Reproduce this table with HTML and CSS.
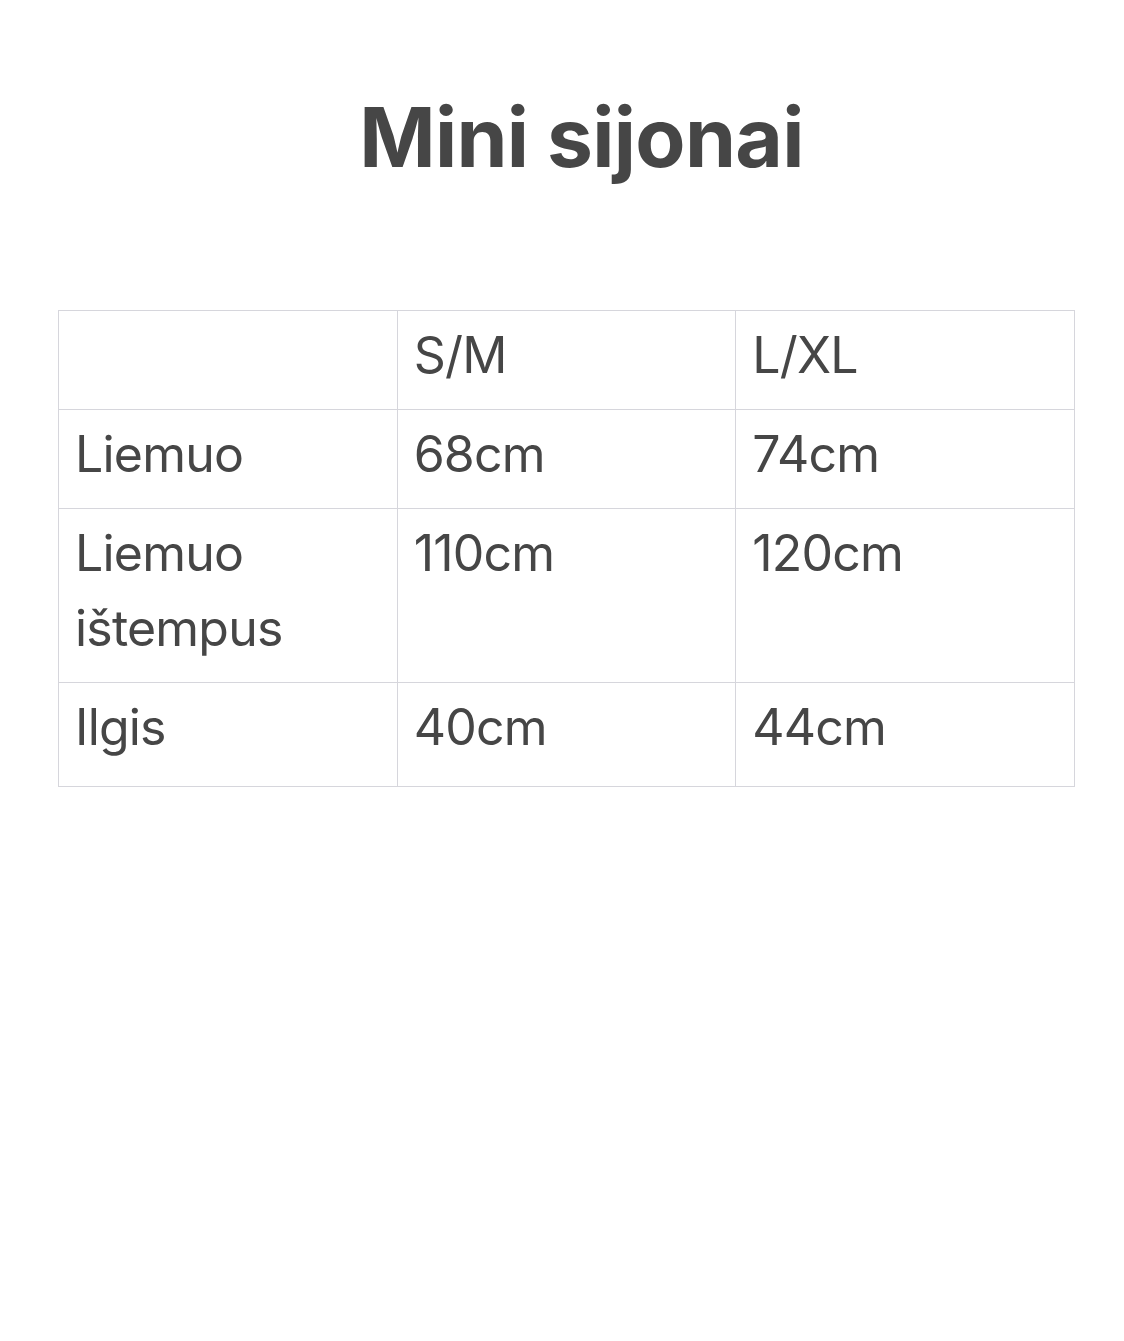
FILE: index.html
```html
<!DOCTYPE html>
<html lang="lt">
<head>
<meta charset="utf-8">
<title>Mini sijonai</title>
<link rel="stylesheet" href="styles.css">
</head>
<body>
<main class="page">
  <h1 class="title">Mini sijonai</h1>
  <table class="sizes">
    <tbody>
      <tr><td></td><td>S/M</td><td>L/XL</td></tr>
      <tr><td>Liemuo</td><td>68cm</td><td>74cm</td></tr>
      <tr><td>Liemuo ištempus</td><td>110cm</td><td>120cm</td></tr>
      <tr class="last"><td>Ilgis</td><td>40cm</td><td>44cm</td></tr>
    </tbody>
  </table>
</main>
</body>
</html>
```
FILE: styles.css
```css
html, body {
  margin: 0;
  padding: 0;
  background: #ffffff;
}
body {
  font-family: Inter, "Noto Sans", sans-serif;
  color: #464646;
}
.page {
  padding: 0 49px 0 58px;
}
.title {
  margin: 0;
  padding-top: 88px;
  height: 310px;
  box-sizing: border-box;
  text-align: center;
  font-size: 82px;
  line-height: 100px;
  font-weight: 700;
  padding-left: 30px;
  letter-spacing: -0.7px;
}
.sizes {
  width: 1017px;
  border-collapse: collapse;
  table-layout: fixed;
  font-family: Inter, Roboto, sans-serif;
  font-size: 50px;
  letter-spacing: -0.8px;
  line-height: 75px;
}
.sizes td {
  border: 1px solid #d6d6dc;
  padding: 7px 16px 16px 16px;
  vertical-align: top;
  text-align: left;
}
.sizes .last td {
  padding-bottom: 21px;
}
```
